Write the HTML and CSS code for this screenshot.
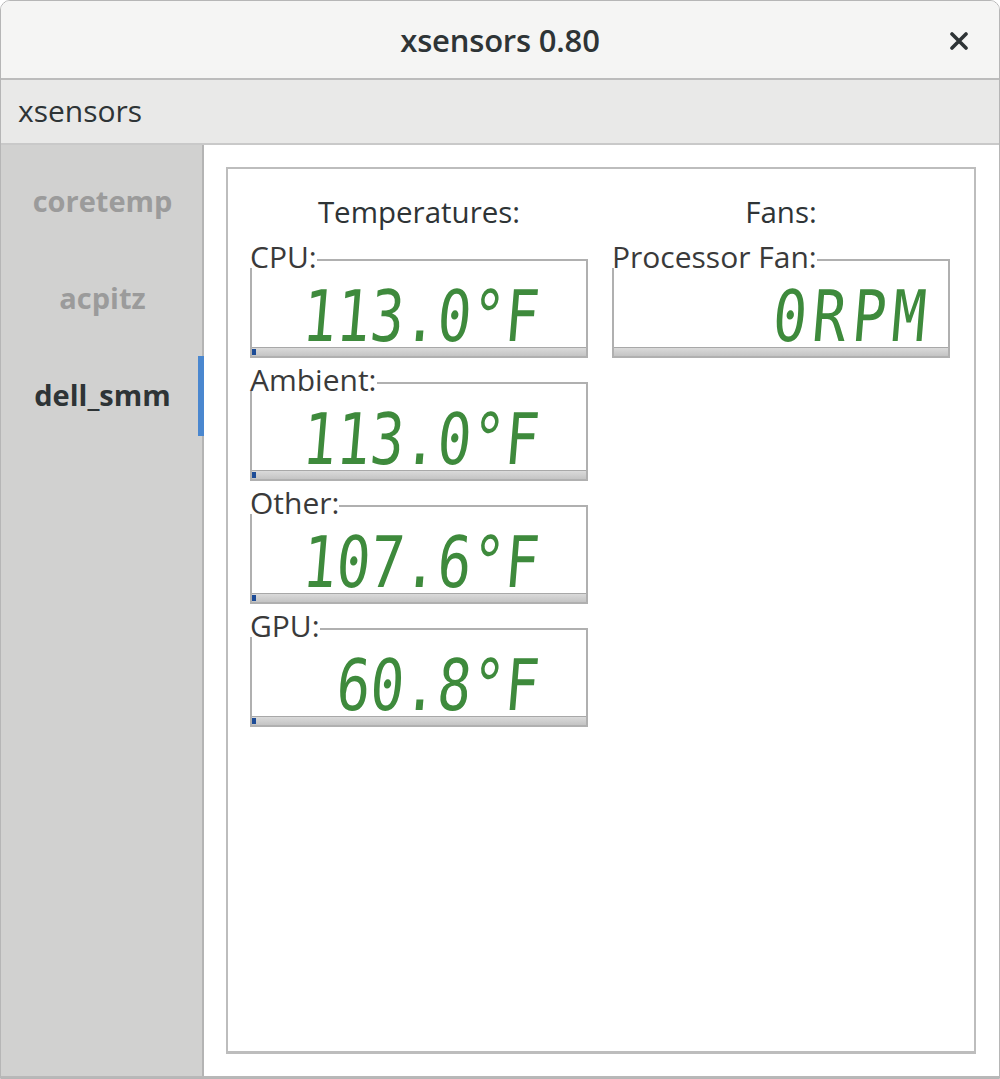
FILE: index.html
```html
<!DOCTYPE html>
<html>
<head>
<meta charset="utf-8">
<title>xsensors 0.80</title>
<link rel="stylesheet" href="styles.css">
</head>
<body>
<div class="window">
  <div class="titlebar">
    <span class="title">xsensors 0.80</span>
    <svg class="close" width="18" height="18" viewBox="0 0 18 18"><path d="M2 2 L16 16 M16 2 L2 16" stroke="#2e3436" stroke-width="3.6" stroke-linecap="round"/></svg>
  </div>
  <div class="menubar">xsensors</div>
  <div class="main">
    <div class="sidebar">
      <div class="tab">coretemp</div>
      <div class="tab">acpitz</div>
      <div class="tab active">dell_smm</div>
    </div>
    <div class="content">
      <div class="frame">
        <div class="column">
          <div class="heading">Temperatures:</div>
          <div class="group">
            <div class="group-head"><span class="glabel">CPU:</span><span class="gline"></span></div>
            <div class="group-body">
              <div class="lcd">113.0°F</div>
              <div class="bar"><span class="fill"></span></div>
            </div>
          </div>
          <div class="group">
            <div class="group-head"><span class="glabel">Ambient:</span><span class="gline"></span></div>
            <div class="group-body">
              <div class="lcd">113.0°F</div>
              <div class="bar"><span class="fill"></span></div>
            </div>
          </div>
          <div class="group">
            <div class="group-head"><span class="glabel">Other:</span><span class="gline"></span></div>
            <div class="group-body">
              <div class="lcd">107.6°F</div>
              <div class="bar"><span class="fill"></span></div>
            </div>
          </div>
          <div class="group">
            <div class="group-head"><span class="glabel">GPU:</span><span class="gline"></span></div>
            <div class="group-body">
              <div class="lcd">60.8°F</div>
              <div class="bar"><span class="fill"></span></div>
            </div>
          </div>
        </div>
        <div class="column">
          <div class="heading">Fans:</div>
          <div class="group">
            <div class="group-head"><span class="glabel">Processor Fan:</span><span class="gline"></span></div>
            <div class="group-body">
              <div class="lcd fan">0RPM</div>
              <div class="bar"></div>
            </div>
          </div>
        </div>
      </div>
    </div>
  </div>
</div>
</body>
</html>
```
FILE: styles.css
```css
* { box-sizing: border-box; }
html, body { margin: 0; padding: 0; background: #ffffff; }
body { font-family: "Open Sans", "Noto Sans", sans-serif; color: #2e3436; }
.window {
  width: 1000px; height: 1079px;
  display: flex; flex-direction: column;
  border: 1px solid #b6b6b6;
  border-radius: 10px 10px 0 0;
  overflow: hidden;
  background: #fff;
}
.titlebar {
  height: 79px; flex: none;
  background: #f5f5f4;
  border-bottom: 2px solid #bcbcbc;
  display: flex; align-items: center; justify-content: center;
  position: relative;
}
.title { font-size: 31px; font-weight: 600; color: #2e3436; letter-spacing: -0.2px; }
.close { position: absolute; right: 31px; top: 31px; }
.menubar {
  height: 65px; flex: none;
  background: #e9e9e8;
  border-bottom: 2px solid #c9c9c9;
  font-size: 30px; color: #2e3436;
  padding-left: 17px;
  display: flex; align-items: center;
  padding-bottom: 2px;
}
.main { flex: 1; display: flex; min-height: 0; border-bottom: 2px solid #b8b8b8; }
.sidebar {
  width: 203px; flex: none;
  background: #d1d1d0;
  border-right: 2px solid #b4b4b4;
  padding-top: 17px;
  display: flex; flex-direction: column; gap: 17px;
}
.tab {
  height: 80px;
  display: flex; align-items: center; justify-content: center;
  font-size: 29px; font-weight: 700; color: #9b9b9b;
  padding-bottom: 4px;
  margin-right: -2px;
}
.tab.active { color: #2e3436; border-right: 6px solid #4a87cf; padding-left: 6px; }
.content { flex: 1; padding: 22px 23px 22px 22px; }
.frame {
  height: 100%;
  border: 2px solid #bdbdbd;
  border-bottom-width: 3px;
  display: flex; gap: 24px;
  padding: 22px 22px 0 22px;
}
.column { width: 338px; display: flex; flex-direction: column; gap: 11px; }
.heading { text-align: center; font-size: 29.5px; color: #2e3436; height: 42px; line-height: 42px; margin-bottom: 2px; }
.group { display: flex; flex-direction: column; }
.group-head { display: flex; height: 22px; }
.glabel { font-size: 30px; line-height: 22px; color: #3a3a3a; }
.gline { flex: 1; margin-top: 13px; border-top: 2px solid #b0b0b0; border-right: 2px solid #b0b0b0; }
.group-body {
  height: 90px;
  border: 2px solid #b0b0b0; border-top: 0;
  display: flex; flex-direction: column; justify-content: flex-end;
}
.lcd {
  font-family: "DejaVu Sans Mono", monospace;
  font-size: 56px; line-height: 56px; height: 56px;
  color: #3e8a3c;
  text-align: right;
  padding-right: 49px;
  transform-origin: 50% 47px;
  transform: scaleY(1.27) skewX(-6deg);
  margin-bottom: -3px;
  position: relative; z-index: 0;
}
.lcd.fan { padding-right: 18px; letter-spacing: 6px; }
.bar {
  height: 9px;
  background: linear-gradient(#dadada, #c4c4c4);
  border-top: 1px solid #a8a8a8;
  position: relative; z-index: 1;
}
.fill { position: absolute; left: 0; top: 1px; width: 4px; height: 6px; background: #1d4c97; }
```
